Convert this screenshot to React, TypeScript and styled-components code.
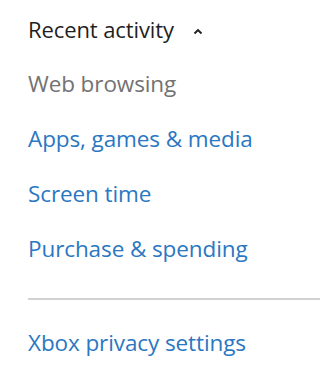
import React from "react";
import styled, { createGlobalStyle } from "styled-components";

const Global = createGlobalStyle`
  html, body { margin: 0; padding: 0; background: #ffffff; }
  body { font-family: "Open Sans", "Noto Sans", "Liberation Sans", sans-serif; }
`;

const Panel = styled.nav`
  display: flex;
  flex-direction: column;
  padding: 1px 0 0 28px;
  width: 320px;
  box-sizing: border-box;
`;

const Heading = styled.button`
  display: flex;
  align-items: center;
  gap: 19px;
  height: 55px;
  padding: 0;
  border: none;
  background: none;
  font: inherit;
  font-size: 22px;
  color: #1f1f1f;
  letter-spacing: -0.1px;
  cursor: pointer;
  text-align: left;
`;

const Caret = styled.svg`
  width: 10px;
  height: 7px;
  margin-top: 5px;
`;

const Item = styled.a<{ $current?: boolean }>`
  display: flex;
  align-items: center;
  height: 55px;
  font-size: 22.5px;
  letter-spacing: -0.1px;
  text-decoration: none;
  color: ${(p) => (p.$current ? "#737373" : "#2a77c2")};
  cursor: pointer;
`;

const Divider = styled.hr`
  margin: 22px 0 15px 0;
  border: none;
  height: 2px;
  background: #d2d2d2;
`;

export default function App() {
  return (
    <>
      <Global />
      <Panel>
        <Heading>
          Recent activity
          <Caret viewBox="0 0 10 7">
            <path d="M1.5 5.5 L5 2 L8.5 5.5" fill="none" stroke="#1f1f1f" strokeWidth="1.9" />
          </Caret>
        </Heading>
        <Item $current>Web browsing</Item>
        <Item>Apps, games &amp; media</Item>
        <Item>Screen time</Item>
        <Item>Purchase &amp; spending</Item>
        <Divider />
        <Item>Xbox privacy settings</Item>
      </Panel>
    </>
  );
}
